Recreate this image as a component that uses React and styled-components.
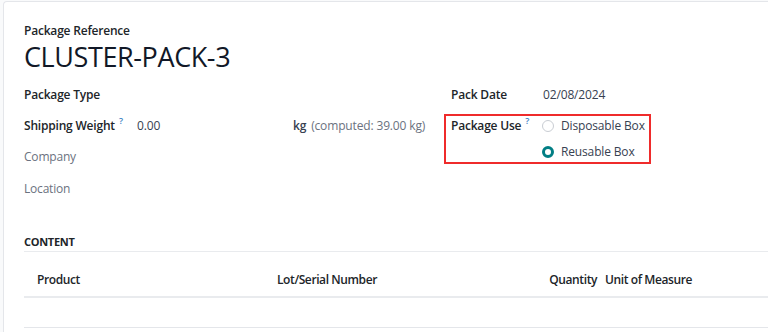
import React from "react";
import styled, { createGlobalStyle } from "styled-components";

const Global = createGlobalStyle`
  html, body { margin: 0; padding: 0; background: #f9fafb; }
  body { font-family: "Open Sans", "Noto Sans", sans-serif; color: #212529; font-size: 12px; }
  #root { padding: 1px 0 0 3px; height: 331px; overflow: hidden; }
`;

const Sheet = styled.div`
  background: #fff;
  border-top: 1px solid #e4e6ea;
  border-left: 1px solid #e4e6ea;
  border-top-left-radius: 4px;
  height: 340px;
  padding: 20px 0 0 20px;
  box-sizing: border-box;
`;

const RefLabel = styled.div`
  font-weight: 600;
  font-size: 12px;
  line-height: 18px;
  letter-spacing: -0.2px;
`;

const Title = styled.h1`
  margin: 0;
  font-weight: 400;
  font-size: 27px;
  line-height: 34px;
  letter-spacing: -0.4px;
  color: #111827;
`;

const Groups = styled.div`
  display: grid;
  grid-template-columns: 427px 1fr;
  margin-top: 11px;
`;

const Col = styled.div`
  display: flex;
  flex-direction: column;
`;

const Row = styled.div`
  display: flex;
  align-items: flex-start;
  min-height: ${(p) => p.$h || 31}px;
`;

const Label = styled.div`
  width: ${(p) => p.$w}px;
  flex: none;
  font-weight: ${(p) => (p.$muted ? 400 : 600)};
  color: ${(p) => (p.$muted ? "#6b7280" : "#212529")};
  letter-spacing: -0.2px;
  line-height: 20px;
`;

const Help = styled.sup`
  color: #3b82c4;
  font-size: 9px;
  font-weight: 600;
  margin-left: 4px;
  vertical-align: 6px;
  line-height: 0;
`;

const Value = styled.div`
  line-height: 20px;
  letter-spacing: -0.15px;
  color: #374151;
`;

const WeightInput = styled(Value)`
  width: 156px;
`;

const Unit = styled.span`
  line-height: 20px;
  font-weight: 600;
  color: #374151;
  margin-right: 5px;
  letter-spacing: -0.2px;
`;

const Computed = styled.span`
  line-height: 20px;
  color: #6b7280;
  letter-spacing: -0.15px;
`;

const Highlight = styled.div`
  position: relative;
  &::after {
    content: "";
    position: absolute;
    left: -7px;
    top: -2px;
    width: 207px;
    height: 50px;
    box-sizing: border-box;
    border: 2px solid #ef2b2b;
    pointer-events: none;
  }
`;

const RadioList = styled.div`
  display: flex;
  flex-direction: column;
  gap: 6px;
`;

const RadioItem = styled.label`
  display: flex;
  align-items: center;
  gap: 7px;
  line-height: 20px;
  color: #374151;
  letter-spacing: -0.15px;
`;

const RadioDot = styled.span`
  width: 12px;
  height: 12px;
  border-radius: 50%;
  box-sizing: border-box;
  flex: none;
  margin-left: 0px;
  border: ${(p) => (p.$on ? "3.5px solid #017e84" : "1px solid #c9cdd3")};
  background: #fff;
`;

const Section = styled.div`
  margin-top: 24px;
`;

const SectionTitle = styled.div`
  font-weight: 700;
  font-size: 11px;
  letter-spacing: -0.3px;
  line-height: 16px;
  padding-bottom: 1px;
  border-bottom: 1px solid #e9ebee;
`;

const Table = styled.div`
  display: grid;
  grid-template-columns: 253px 243px 85px 1fr;
`;

const Th = styled.div`
  font-weight: 600;
  font-size: 12px;
  letter-spacing: -0.4px;
  height: 46px;
  box-sizing: border-box;
  padding-top: 10px;
  display: flex;
  align-items: center;
  padding-left: ${(p) => p.$pl || 0}px;
  justify-content: ${(p) => (p.$right ? "flex-end" : "flex-start")};
  padding-right: ${(p) => (p.$right ? 8 : 0)}px;
  border-bottom: 2px solid #e9ebee;
  color: #212529;
`;

const EmptyRow = styled.div`
  grid-column: 1 / -1;
  height: 30px;
  box-sizing: border-box;
  border-bottom: 1px solid #e4e6ea;
`;

export default function App() {
  return (
    <>
      <Global />
      <Sheet>
        <RefLabel>Package Reference</RefLabel>
        <Title>CLUSTER-PACK-3</Title>
        <Groups>
          <Col>
            <Row>
              <Label $w={113}>Package Type</Label>
            </Row>
            <Row>
              <Label $w={113}>
                Shipping Weight<Help>?</Help>
              </Label>
              <WeightInput>0.00</WeightInput>
              <Unit>kg</Unit>
              <Computed>(computed: 39.00 kg)</Computed>
            </Row>
            <Row $h={32}>
              <Label $w={113} $muted>Company</Label>
            </Row>
            <Row>
              <Label $w={113} $muted>Location</Label>
            </Row>
          </Col>
          <Col>
            <Row>
              <Label $w={92}>Pack Date</Label>
              <Value>02/08/2024</Value>
            </Row>
            <Highlight>
              <Row>
                <Label $w={91}>
                  Package Use<Help>?</Help>
                </Label>
                <RadioList>
                  <RadioItem>
                    <RadioDot />
                    Disposable Box
                  </RadioItem>
                  <RadioItem>
                    <RadioDot $on />
                    Reusable Box
                  </RadioItem>
                </RadioList>
              </Row>
            </Highlight>
          </Col>
        </Groups>
        <Section>
          <SectionTitle>CONTENT</SectionTitle>
          <Table>
            <Th $pl={13}>Product</Th>
            <Th>Lot/Serial Number</Th>
            <Th $right>Quantity</Th>
            <Th>Unit of Measure</Th>
            <EmptyRow />
          </Table>
        </Section>
      </Sheet>
    </>
  );
}
